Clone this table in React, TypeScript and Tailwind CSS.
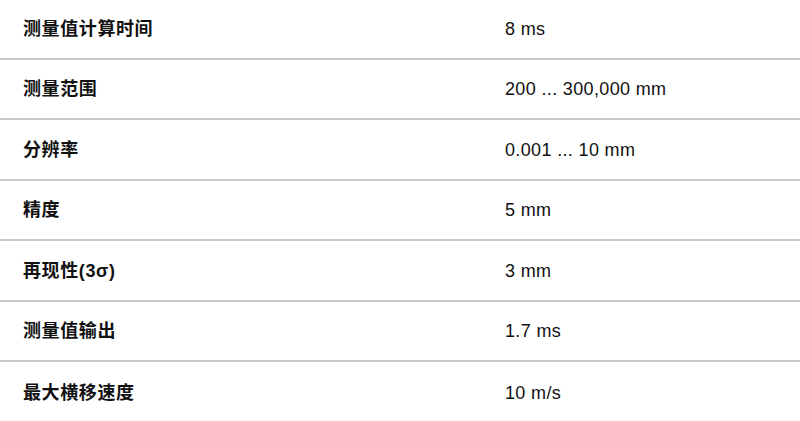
import React from "react";

const rows: [string, string][] = [
  ["测量值计算时间", "8 ms"],
  ["测量范围", "200 ... 300,000 mm"],
  ["分辨率", "0.001 ... 10 mm"],
  ["精度", "5 mm"],
  ["再现性(3σ)", "3 mm"],
  ["测量值输出", "1.7 ms"],
  ["最大横移速度", "10 m/s"],
];

export default function App() {
  return (
    <div className="w-[800px] h-[421px] overflow-hidden bg-white">
      <div className="mt-[-1px] flex flex-col">
        {rows.map(([k, v], i) => (
          <div
            key={i}
            className={
              "grid grid-cols-[505px_1fr] items-center h-[60.5px] pt-[2px] " +
              (i < rows.length - 1 ? "border-b-2 border-[#c8c8c8]" : "")
            }
          >
            <div
              className="pl-[23px] text-[18px] font-bold text-[#111] tracking-[0.6px]"
              style={{ fontFamily: '"Liberation Sans", "Noto Sans CJK SC", sans-serif' }}
            >
              {k}
            </div>
            <div
              className="text-[18px] text-[#111] tracking-[0.35px]"
              style={{ fontFamily: '"Liberation Sans", Arial, sans-serif' }}
            >
              {v}
            </div>
          </div>
        ))}
      </div>
    </div>
  );
}
